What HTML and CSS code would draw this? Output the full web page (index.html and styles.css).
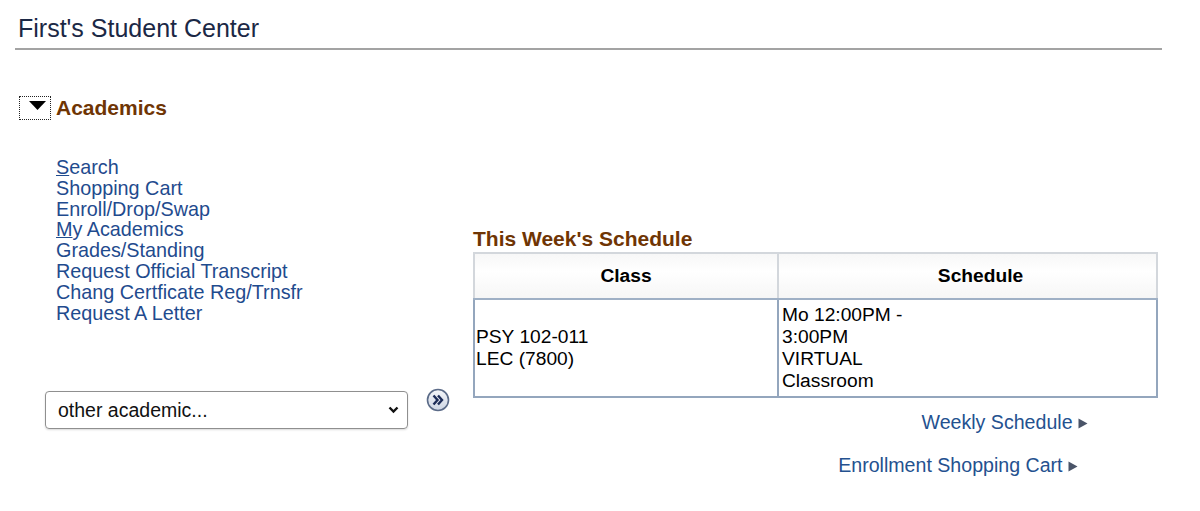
FILE: index.html
```html
<!DOCTYPE html>
<html lang="en">
<head>
<meta charset="utf-8">
<title>Student Center</title>
<link rel="stylesheet" href="styles.css">
</head>
<body>
<header class="page-header">
  <h1 class="page-title">First's Student Center</h1>
</header>
<main class="main">
  <section class="left-col">
    <div class="section-head">
      <span class="toggle">
        <svg width="17" height="9" viewBox="0 0 17 9"><polygon points="0,0 17,0 8.5,9" fill="#000"/></svg>
      </span>
      <h2 class="section-title">Academics</h2>
    </div>
    <ul class="nav-links">
      <li><a href="#"><u>S</u>earch</a></li>
      <li><a href="#">Shopping Cart</a></li>
      <li><a href="#">Enroll/Drop/Swap</a></li>
      <li><a href="#"><u>M</u>y Academics</a></li>
      <li><a href="#">Grades/Standing</a></li>
      <li><a href="#">Request Official Transcript</a></li>
      <li><a href="#">Chang Certficate Reg/Trnsfr</a></li>
      <li><a href="#">Request A Letter</a></li>
    </ul>
    <div class="select-row">
      <div class="select-box">
        <span class="select-text">other academic...</span>
        <svg class="chevron" width="11" height="8" viewBox="0 0 11 8"><polyline points="1.5,1.5 5.5,5.5 9.5,1.5" fill="none" stroke="#111" stroke-width="2.4"/></svg>
      </div>
      <span class="go-btn">
        <svg width="24" height="24" viewBox="0 0 24 24">
          <defs>
            <linearGradient id="g" x1="0" y1="0" x2="0" y2="1">
              <stop offset="0" stop-color="#f4f6fa"/>
              <stop offset="1" stop-color="#cdd5e3"/>
            </linearGradient>
          </defs>
          <circle cx="12" cy="12" r="10.5" fill="url(#g)" stroke="#5b6b88" stroke-width="1.6"/>
          <polyline points="7.5,7.5 11.5,12 7.5,16.5" fill="none" stroke="#1c2c58" stroke-width="2.4"/>
          <polyline points="12,7.5 16,12 12,16.5" fill="none" stroke="#1c2c58" stroke-width="2.4"/>
        </svg>
      </span>
    </div>
  </section>
  <section class="right-col">
    <h3 class="schedule-title">This Week's Schedule</h3>
    <table class="schedule">
      <thead>
        <tr>
          <th class="col-class">Class</th>
          <th class="col-sched">Schedule</th>
        </tr>
      </thead>
      <tbody>
        <tr>
          <td class="cell-class">PSY 102-011<br>LEC (7800)</td>
          <td class="cell-sched">Mo 12:00PM -<br>3:00PM<br>VIRTUAL<br>Classroom</td>
        </tr>
      </tbody>
    </table>
    <div class="more-links">
      <a href="#" class="more weekly">Weekly Schedule <svg width="10" height="11" viewBox="0 0 10 11"><polygon points="0.5,0.5 9.5,5.5 0.5,10.5" fill="#4a5468"/></svg></a>
      <a href="#" class="more cart">Enrollment Shopping Cart <svg width="10" height="11" viewBox="0 0 10 11"><polygon points="0.5,0.5 9.5,5.5 0.5,10.5" fill="#4a5468"/></svg></a>
    </div>
  </section>
</main>
</body>
</html>
```

FILE: styles.css
```css
* { box-sizing: border-box; }

html, body {
  margin: 0;
  padding: 0;
  background: #fff;
}

body {
  font-family: "Liberation Sans", Arial, sans-serif;
  color: #000;
  width: 1200px;
  height: 511px;
  overflow: hidden;
}

.page-header {
  margin: 0 38px 0 15px;
  padding-top: 14px;
  height: 50px;
  border-bottom: 2px solid #a3a3a3;
}

.page-title {
  margin: 0;
  padding-left: 3px;
  font-size: 25px;
  line-height: 28px;
  font-weight: normal;
  color: #1b2845;
}

.main {
  display: flex;
}

.left-col {
  flex: 0 0 473px;
  padding-top: 46px;
}

.section-head {
  display: flex;
  align-items: center;
  padding-left: 19px;
  height: 24px;
}

.toggle {
  display: flex;
  align-items: center;
  justify-content: center;
  width: 32px;
  height: 24px;
  border: 1px dotted #222;
  padding-bottom: 5px;
  padding-left: 5px;
}

.section-title {
  margin: 0 0 0 5px;
  font-size: 21px;
  font-weight: bold;
  color: #6f3504;
}

.nav-links {
  list-style: none;
  margin: 37px 0 0 56px;
  padding: 0;
}

.nav-links li {
  font-size: 19.8px;
  line-height: 20.8px;
}

.nav-links a {
  color: #1f4b8e;
  text-decoration: none;
}

.nav-links u {
  text-decoration: underline;
}

.select-row {
  display: flex;
  align-items: flex-start;
  margin-top: 68px;
  padding-left: 45px;
}

.select-box {
  display: flex;
  align-items: center;
  justify-content: space-between;
  width: 363px;
  height: 38px;
  border: 1px solid #8f8f8f;
  border-radius: 4px;
  padding: 0 8px 0 12px;
  box-shadow: 0 1px 2px rgba(0,0,0,0.15);
}

.select-text {
  font-size: 19.5px;
  color: #111;
}

.go-btn {
  display: inline-flex;
  margin: -3px 0 0 18px;
}

.right-col {
  flex: 0 0 684px;
  padding-top: 178px;
}

.schedule-title {
  margin: 0;
  font-size: 21px;
  line-height: 22px;
  font-weight: bold;
  color: #6f3504;
  padding-bottom: 2px;
}

.schedule {
  width: 685px;
  border-collapse: collapse;
  border: 2px solid #a8b6c8;
  font-size: 19.2px;
}

.schedule th {
  height: 46px;
  font-weight: bold;
  text-align: center;
  background: linear-gradient(#f7f7f7, #ffffff 40%, #f6f6f6);
  border: 2px solid #d3d7dc;
  border-bottom: 2px solid #9fb0c5;
  padding: 0;
}

.col-class { width: 304px; }

.col-sched { padding-left: 26px !important; }

.schedule td {
  height: 98px;
  border: 2px solid #94a6bd;
  padding: 2px 3px;
  line-height: 22px;
}

.cell-class {
  vertical-align: middle;
  line-height: 21px;
  padding-left: 1px !important;
}

.cell-sched {
  vertical-align: top;
  padding-top: 4px !important;
}

.more-links {
  display: flex;
  flex-direction: column;
  align-items: flex-end;
}

.more {
  color: #24518f;
  text-decoration: none;
  font-size: 19.6px;
  line-height: 22px;
}

.weekly {
  margin-top: 13px;
  margin-right: 70px;
}

.cart {
  margin-top: 21px;
  margin-right: 80px;
}
```
